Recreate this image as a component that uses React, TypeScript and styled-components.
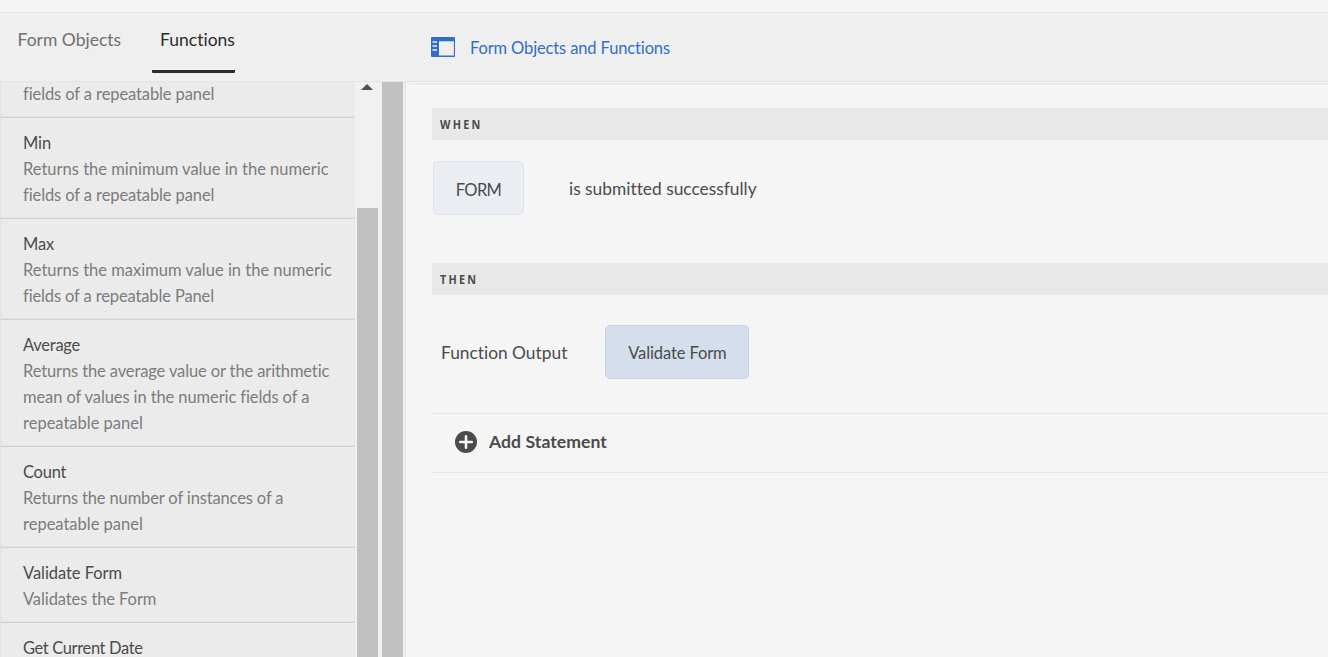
import React from 'react';
import styled, { createGlobalStyle } from 'styled-components';

const GlobalStyle = createGlobalStyle`
  * { box-sizing: border-box; }
  body {
    margin: 0;
    background: #f5f5f5;
    color: #4b4b4b;
    font-family: Lato, "Open Sans", sans-serif;
    font-variant-ligatures: none;
    overflow: hidden;
  }
`;

const Page = styled.div`
  height: 100vh;
  display: flex;
  flex-direction: column;
  padding-top: 12px;
`;

const Header = styled.header`
  flex: none;
  height: 70px;
  display: flex;
  background: #efefef;
  border-top: 1px solid #e6e6e6;
  border-bottom: 1px solid #e4e4e4;
`;

const Tabs = styled.nav`
  width: 431px;
  display: flex;
  align-items: flex-start;
  padding-left: 9.5px;
  gap: 31px;
`;

const Tab = styled.div<{ $active?: boolean }>`
  height: 60px;
  padding: 14px 0 0 8px;
  font-size: 17.5px;
  line-height: 26px;
  white-space: nowrap;
  color: ${p => (p.$active ? '#2c2c2c' : '#707070')};
  border-bottom: 3px solid ${p => (p.$active ? '#2c2c2c' : 'transparent')};
  border-radius: 1px;
`;

const PanelToggle = styled.div`
  display: flex;
  align-items: center;
  gap: 15px;
  height: 68px;
  font-size: 16.5px;
  letter-spacing: -0.13px;
  color: #326ec8;
  white-space: nowrap;
  span { padding-top: 2px; }
`;

const Body = styled.div`
  flex: 1;
  min-height: 0;
  display: flex;
`;

const FunctionList = styled.div`
  width: 355px;
  border-left: 1px solid #e3e3e3;
  background: #ebebeb;
  overflow: hidden;
`;

const FunctionItem = styled.div<{ $clipped?: boolean }>`
  padding: ${p => (p.$clipped ? '0' : '12px')} 0 10px 22px;
  margin-top: ${p => (p.$clipped ? '-1px' : '0')};
  border-bottom: 1px solid #d0d0d0;
  box-shadow: inset 0 -1px 0 #e3e3e3;
  font-size: 16.5px;
  line-height: 26px;
  white-space: nowrap;
`;

const Name = styled.div<{ $spacing?: number }>`
  color: #4b4b4b;
  letter-spacing: ${p => p.$spacing ?? -0.1}px;
`;

const Description = styled.div<{ $spacing?: number }>`
  color: #7c7c7c;
  letter-spacing: ${p => p.$spacing ?? 0}px;
`;

const Track = styled.div`
  width: 27px;
  display: flex;
  flex-direction: column;
  background: #f1f1f1;
  padding: 2px 4px 0 2px;
`;

const ArrowUp = styled.div`
  height: 124px;
  padding-left: 4px;
  &::before {
    content: '';
    display: block;
    width: 0;
    border: 6px solid transparent;
    border-top: 0;
    border-bottom-color: #505050;
  }
`;

const Thumb = styled.div`
  flex: 1;
  background: #c1c1c1;
`;

const OuterBar = styled.div`
  width: 24px;
  background: linear-gradient(to right, #c1c1c1 21px, #f1f1f1 21px);
  border-right: 1px solid #dedede;
`;

const RuleEditor = styled.main`
  flex: 1;
  margin: 1px 0 0 3px;
  border-top: 2px solid #ebebeb;
  padding: 23px 0 0 23px;
`;

const SectionTitle = styled.div`
  height: 32px;
  padding-left: 8px;
  background: #e8e8e8;
  font-family: "Open Sans", sans-serif;
  font-size: 12px;
  font-weight: 700;
  line-height: 33px;
  letter-spacing: 2.5px;
  span {
    display: inline-block;
    transform: scaleX(0.9);
    transform-origin: left;
  }
`;

const Statement = styled.div<{ $top: number; $bottom: number; $gap: number; $indent: number }>`
  display: flex;
  align-items: center;
  gap: ${p => p.$gap}px;
  padding: ${p => `${p.$top}px 0 ${p.$bottom}px ${p.$indent}px`};
  font-size: 17.35px;
  line-height: 26px;
  white-space: nowrap;
`;

const Phrase = styled.span`
  padding-top: 2px;
`;

const Chip = styled.div<{ $selected?: boolean }>`
  width: ${p => (p.$selected ? 144 : 91)}px;
  height: 54px;
  padding-top: ${p => (p.$selected ? 2 : 3)}px;
  display: flex;
  align-items: center;
  justify-content: center;
  border: 1px solid ${p => (p.$selected ? '#c5d1e5' : '#dce1e7')};
  border-radius: 5px;
  background: ${p => (p.$selected ? '#d5deec' : '#eaeef3')};
  font-size: 16.5px;
  letter-spacing: ${p => (p.$selected ? -0.1 : -0.7)}px;
`;

const AddStatement = styled.div`
  height: 60px;
  display: flex;
  align-items: center;
  gap: 12px;
  padding: 0 0 3px 23px;
  border-top: 1px solid #e6e6e6;
  border-bottom: 1px solid #e6e6e6;
  font-size: 17.6px;
  font-weight: 700;
  letter-spacing: 0.05px;
`;

const PanelIcon = () => (
  <svg width="24" height="20" viewBox="0 0 24 20">
    <rect width="24" height="20" rx="0.8" fill="#326ec8" />
    <rect x="8" y="4.3" width="14.9" height="14.2" fill="#efefef" />
    <path d="M1.5 5h4.5M1.5 9h4.5M1.5 13h4.5" stroke="#e8eefa" strokeWidth="1.3" />
  </svg>
);

const PlusIcon = () => (
  <svg width="22" height="22" viewBox="0 0 22 22">
    <circle cx="11" cy="11" r="11" fill="#4b4b4b" />
    <path d="M11 5.2v11.6M5.2 11h11.6" stroke="#f5f5f5" strokeWidth="2.6" strokeLinecap="round" />
  </svg>
);

type Line = { text: string; spacing?: number };
type FunctionEntry = { name: string; spacing?: number; lines: Line[] };

const functions: FunctionEntry[] = [
  {
    name: 'Min',
    lines: [
      { text: 'Returns the minimum value in the numeric' },
      { text: 'fields of a repeatable panel', spacing: -0.1 },
    ],
  },
  {
    name: 'Max',
    lines: [
      { text: 'Returns the maximum value in the numeric' },
      { text: 'fields of a repeatable Panel', spacing: -0.13 },
    ],
  },
  {
    name: 'Average',
    spacing: -0.25,
    lines: [
      { text: 'Returns the average value or the arithmetic', spacing: -0.12 },
      { text: 'mean of values in the numeric fields of a', spacing: -0.1 },
      { text: 'repeatable panel' },
    ],
  },
  {
    name: 'Count',
    spacing: -0.25,
    lines: [
      { text: 'Returns the number of instances of a', spacing: -0.14 },
      { text: 'repeatable panel' },
    ],
  },
  { name: 'Validate Form', spacing: -0.05, lines: [{ text: 'Validates the Form', spacing: -0.09 }] },
  { name: 'Get Current Date', spacing: -0.37, lines: [] },
];

export default function App() {
  return (
    <>
      <GlobalStyle />
      <Page>
        <Header>
          <Tabs>
            <Tab>Form Objects</Tab>
            <Tab $active>Functions</Tab>
          </Tabs>
          <PanelToggle>
            <PanelIcon />
            <span>Form Objects and Functions</span>
          </PanelToggle>
        </Header>
        <Body>
          <FunctionList>
            <FunctionItem $clipped>
              <Description $spacing={-0.1}>fields of a repeatable panel</Description>
            </FunctionItem>
            {functions.map(fn => (
              <FunctionItem key={fn.name}>
                <Name $spacing={fn.spacing}>{fn.name}</Name>
                {fn.lines.map(line => (
                  <Description key={line.text} $spacing={line.spacing}>
                    {line.text}
                  </Description>
                ))}
              </FunctionItem>
            ))}
          </FunctionList>
          <Track>
            <ArrowUp />
            <Thumb />
          </Track>
          <OuterBar />
          <RuleEditor>
            <SectionTitle>
              <span>WHEN</span>
            </SectionTitle>
            <Statement $top={21} $bottom={48} $gap={45} $indent={1}>
              <Chip>FORM</Chip>
              <Phrase>is submitted successfully</Phrase>
            </Statement>
            <SectionTitle>
              <span>THEN</span>
            </SectionTitle>
            <Statement $top={30} $bottom={34} $gap={38} $indent={9}>
              <Phrase>Function Output</Phrase>
              <Chip $selected>Validate Form</Chip>
            </Statement>
            <AddStatement>
              <PlusIcon />
              Add Statement
            </AddStatement>
          </RuleEditor>
        </Body>
      </Page>
    </>
  );
}
